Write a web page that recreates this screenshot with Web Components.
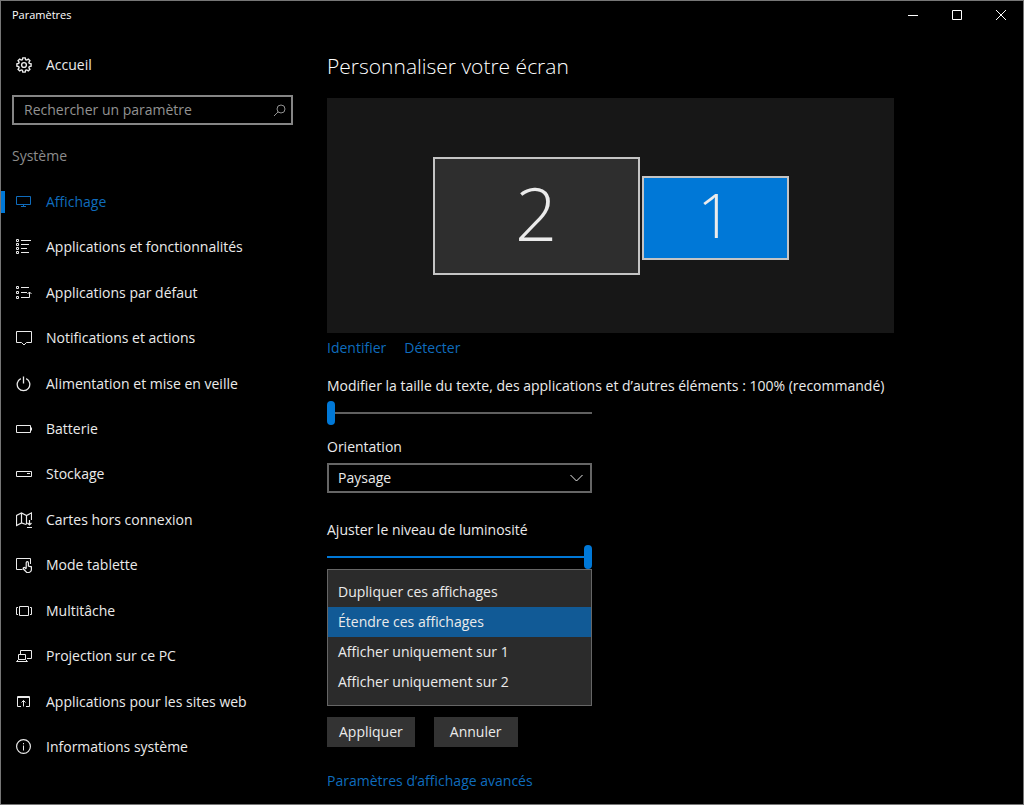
<!DOCTYPE html>
<html lang="fr">
<head>
<meta charset="utf-8">
<meta name="viewport" content="width=device-width, initial-scale=1">
<title>Paramètres</title>
<style>
  html, body { margin: 0; background: #000; }
  body { font: 14px/20px "Open Sans", "Noto Sans", sans-serif; color: #ebebeb; }
</style>
</head>
<body>
<settings-window>
  <title-bar slot="bar">Paramètres</title-bar>
  <side-nav slot="nav" heading="Système">
    <nav-item slot="home" icon="gear">Accueil</nav-item>
    <nav-item icon="monitor" current>Affichage</nav-item>
    <nav-item icon="list">Applications et fonctionnalités</nav-item>
    <nav-item icon="defaults">Applications par défaut</nav-item>
    <nav-item icon="notify">Notifications et actions</nav-item>
    <nav-item icon="power">Alimentation et mise en veille</nav-item>
    <nav-item icon="battery">Batterie</nav-item>
    <nav-item icon="storage">Stockage</nav-item>
    <nav-item icon="maps">Cartes hors connexion</nav-item>
    <nav-item icon="tablet">Mode tablette</nav-item>
    <nav-item icon="multitask">Multitâche</nav-item>
    <nav-item icon="project">Projection sur ce PC</nav-item>
    <nav-item icon="webapps">Applications pour les sites web</nav-item>
    <nav-item icon="info">Informations système</nav-item>
  </side-nav>
  <display-page></display-page>
</settings-window>

<script>
const ICONS = {
  gear: '<g stroke-width="1.400"><path d="M6.800.9h2.400l.4 1.800 1.100.4 1.600-1 1.600 1.600-1 1.600.4 1.100 1.800.4v2.400l-1.800.4-.4 1.100 1 1.600-1.600 1.600-1.600-1-1.100.4-.4 1.800H6.800l-.4-1.800-1.100-.4-1.600 1-1.600-1.600 1-1.600-.4-1.100L.9 9.200V6.800l1.800-.4.4-1.100-1-1.600 1.600-1.600 1.600 1 1.100-.4z"/><circle cx="8" cy="8" r="2.400"/></g>',
  monitor: '<path d="M.5 2.500h14v8H.5zM7.500 10.500v2M5 12.500h5"/>',
  list: '<path d="M.5.500h2v2h-2zM.5 4.500h2v2h-2zM.5 8.500h2v2h-2zM.5 12.500h2v2h-2zM5 1.500h10M5 5.500h8M5 9.500h6M5 13.500h8"/>',
  defaults: '<path d="M.5 1.500h2v2h-2zM.5 6.500h2v2h-2zM.5 11.500h2v2h-2zM5 2.500h8M5 7.500h6M5 12.500h8.500V7M11.500 9l2-2 2 2"/>',
  notify: '<path d="M.5 1.500h15v11h-5L8 15l-2.500-2.500h-5z"/>',
  power: '<path stroke-width="1.300" d="M4.800 2.700a6.300 6.300 0 1 0 5.400 0M7.500.5v7"/>',
  battery: '<path d="M.5 4.500h14v7H.5zM15.500 6.500v3"/>',
  storage: '<path d="M.5 5.500h15v5H.5zM11 7.500h3"/>',
  maps: '<path stroke-width="1.200" d="M10 12.500 5.500 11 .5 13.500v-10L5.500 1l5 2.500L15.500 1v7M5.500 1v10M10.500 3.500v9M13.500 8v5M11.500 11l2 2 2-2M11 15.500h5"/>',
  tablet: '<path d="M6.500 12.500h-6v-11h14V7"/><path stroke-width="1.200" d="M10.200 11.500V5.700a1.100 1.100 0 0 1 2.200 0V9l3 .8v2.700a3 3 0 0 1-3 3h-1.600L7.400 12a1 1 0 0 1 1.500-1.300l1.300 1.300"/>',
  multitask: '<path d="M3.500 3.500h9v9h-9zM2 4.500H.5v7H2M14 4.500h1.500v7H14"/>',
  project: '<path d="M4.500 6V2.500h11v8H11M2.500 6.500h7v5h-7zM.5 13.500h11M2.500 11.500l-2 2M9.500 11.500l2 2"/>',
  webapps: '<path d="M5 12.500H1.500v-10h12v10H10M1.500 3.500h12M7.500 12.500V6.500M5.500 8.500l2-2 2 2"/>',
  info: '<circle cx="7.500" cy="7.500" r="6.900" stroke-width="1.200"/><path d="M7.500 6.500v5M7.500 4v1.300"/>',
  search: '<circle cx="8" cy="5" r="4"/><path d="M5.200 7.800 1 12"/>',
  chevron: '<path d="M.5 1 6.500 7 12.500 1"/>'
};
const icon = (name, w = 16, h = 16) =>
  `<svg width="${w}" height="${h}" viewBox="0 0 ${w} ${h}" fill="none" stroke="currentColor" stroke-width="1" aria-hidden="true">${ICONS[name]}</svg>`;

const BASE = `
  *, *::before { box-sizing: border-box; }
  svg { display: block; flex: none; }
  a { color: inherit; text-decoration: none; }
  button, input, select { font: inherit; color: inherit; margin: 0; border-radius: 0; }
`;

class Part extends HTMLElement {
  connectedCallback() {
    if (this.shadowRoot) return;
    this.attachShadow({ mode: 'open' }).innerHTML = `<style>${BASE}${this.css()}</style>${this.html()}`;
  }
}

customElements.define('settings-window', class extends Part {
  css() { return `
    :host { display: grid; box-sizing: border-box; grid-template: 28px 1fr / 326px minmax(0, 1fr);
            min-height: 100vh; border: 1px solid #767676; background: #000; }
    slot[name=bar]::slotted(*) { grid-column: 1 / -1; }
  `; }
  html() { return `<slot name="bar"></slot><slot name="nav"></slot><slot></slot>`; }
});

customElements.define('title-bar', class extends Part {
  css() { return `
    :host { display: flex; align-items: center; justify-content: space-between;
            padding-left: 11px; font-size: 11px; color: #fff; }
    .controls { display: flex; }
    button { display: grid; place-items: center; width: 44px; height: 28px; padding: 0; border: 0; background: none; }
  `; }
  html() { return `
    <span><slot></slot></span>
    <div class="controls">
      <button aria-label="Réduire"><svg width="10" height="10" stroke="currentColor"><path d="M0 5.500h10"/></svg></button>
      <button aria-label="Agrandir"><svg width="10" height="10" fill="none" stroke="currentColor"><path d="M.5.500h9v9h-9z"/></svg></button>
      <button aria-label="Fermer"><svg width="10" height="10" stroke="currentColor"><path d="M0 0l10 10M10 0L0 10"/></svg></button>
    </div>`; }
});

customElements.define('side-nav', class extends Part {
  css() { return `
    :host { display: block; padding-top: 13px; }
    .home { display: grid; height: 46px; }
    .search { display: flex; align-items: center; height: 30px; margin: 7px 34px 0 11px;
              padding: 0 5px 0 10px; border: 2px solid #858585; color: #929292; }
    input { flex: 1; min-width: 0; padding: 0; border: 0; outline: 0; background: none; }
    input::placeholder { color: #929292; opacity: 1; }
    h2 { margin: 21px 0 0 11px; font: inherit; color: #8c8c8c; }
    nav { display: grid; grid-auto-rows: 1fr; min-height: 591px; margin-top: 13px; }
  `; }
  html() { return `
    <div class="home"><slot name="home"></slot></div>
    <div class="search"><input type="text" aria-label="Rechercher un paramètre" placeholder="Rechercher un paramètre">${icon('search', 13, 13)}</div>
    <h2>${this.getAttribute('heading')}</h2>
    <nav aria-label="${this.getAttribute('heading')}"><slot></slot></nav>`; }
});

customElements.define('nav-item', class extends Part {
  css() { return `
    :host { display: grid; }
    a { display: flex; align-items: center; gap: 14px; padding-left: 11px; border-left: 4px solid transparent; }
    :host([current]) a { color: #0f6cbd; border-image: linear-gradient(transparent 12px, #0078d7 12px, #0078d7 34px, transparent 34px) 0 0 0 4; }
  `; }
  html() { return `<a href="#"${this.hasAttribute('current') ? ' aria-current="page"' : ''}>${icon(this.getAttribute('icon'))}<span><slot></slot></span></a>`; }
});

customElements.define('display-page', class extends Part {
  css() { return `
    :host { display: block; padding: 23px 16px 12px 0; }
    main { max-width: 567px; }
    h1 { margin: 0 0 18px; font-size: 21px; line-height: 28px; font-weight: 300; color: #fff; }
    .links { display: flex; gap: 18px; margin: 5px 0 18px; }
    a { color: #0f6cbd; }
    .fields { display: grid; gap: 12px; }
    .fields setting-slider + setting-choice { margin-bottom: 15px; }
    .buttons { display: flex; gap: 19px; margin: 11px 0 24px; }
    button { height: 30px; padding: 0 12px; border: 0; background: #333; }
    button + button { padding: 0 16px; }
  `; }
  html() { return `
    <main>
      <h1>Personnaliser votre écran</h1>
      <display-canvas>
        <display-monitor number="2"></display-monitor>
        <display-monitor selected number="1"></display-monitor>
      </display-canvas>
      <div class="links"><a href="#">Identifier</a><a href="#">Détecter</a></div>
      <div class="fields">
        <setting-slider value="0" label="Modifier la taille du texte, des applications et d’autres éléments : 100% (recommandé)"></setting-slider>
        <setting-choice label="Orientation"></setting-choice>
        <setting-slider value="100" label="Ajuster le niveau de luminosité"></setting-slider>
      </div>
      <display-menu></display-menu>
      <div class="buttons"><button>Appliquer</button><button>Annuler</button></div>
      <a href="#">Paramètres d’affichage avancés</a>
    </main>`; }
});

customElements.define('display-canvas', class extends Part {
  css() { return `
    :host { display: flex; align-items: center; justify-content: center; gap: 2px; height: 235px; background: #171717; }
  `; }
  html() { return `<slot></slot>`; }
});

customElements.define('display-monitor', class extends Part {
  css() { return `
    :host { display: grid; place-items: center; box-sizing: border-box; width: 207px; height: 118px; padding-bottom: 6px;
            border: 2px solid #c4c4c4; background: #2e2e2e; font-size: 74px; line-height: 80px; font-weight: 300; }
    :host([selected]) { width: 147px; height: 84px; margin-top: 5px; background: #0078d7; font-size: 61px; line-height: 72px; }
  `; }
  html() { return `<span>${this.getAttribute('number')}</span>`; }
});

customElements.define('setting-slider', class extends Part {
  css() { return `
    :host { display: grid; gap: 5px; --track: ${this.getAttribute('value') === '100' ? '#0078d7' : '#606060'}; }
    input { appearance: none; width: 265px; max-width: 100%; height: 24px; background: linear-gradient(var(--track), var(--track)) center / 100% 2px no-repeat; }
    input::-webkit-slider-thumb { appearance: none; width: 8px; height: 24px; border-radius: 4px; background: #0078d7; }
  `; }
  html() { return `<label for="range">${this.getAttribute('label')}</label><input id="range" type="range" min="0" max="100" value="${this.getAttribute('value')}">`; }
});

customElements.define('setting-choice', class extends Part {
  css() { return `
    :host { display: grid; gap: 6px; }
    .box { display: grid; width: 265px; max-width: 100%; align-items: center; }
    select, svg { grid-area: 1 / 1; }
    select { appearance: none; height: 30px; padding: 0 9px; border: 2px solid #666; background: #000; }
    svg { justify-self: end; margin-right: 9px; pointer-events: none; }
  `; }
  html() { return `<label for="choice">${this.getAttribute('label')}</label>
    <div class="box"><select id="choice"><option>Paysage</option></select>${icon('chevron', 13, 8)}</div>`; }
});

customElements.define('display-menu', class extends Part {
  css() { return `
    :host { display: block; }
    select { display: block; appearance: none; width: 265px; max-width: 100%; height: 137px; padding: 7px 0 8px;
             border: 1px solid #666; outline: 0; background: #2b2b2b; overflow: hidden; }
    option { height: 30px; padding: 5px 10px; line-height: 20px; color: #ebebeb; }
    option:checked { background: #115a96 linear-gradient(#115a96, #115a96); color: #ebebeb; -webkit-text-fill-color: #ebebeb; }
  `; }
  html() { return `
    <select size="4" aria-label="Affichages multiples">
      <option>Dupliquer ces affichages</option>
      <option selected>Étendre ces affichages</option>
      <option>Afficher uniquement sur 1</option>
      <option>Afficher uniquement sur 2</option>
    </select>`; }
});
</script>
</body>
</html>
